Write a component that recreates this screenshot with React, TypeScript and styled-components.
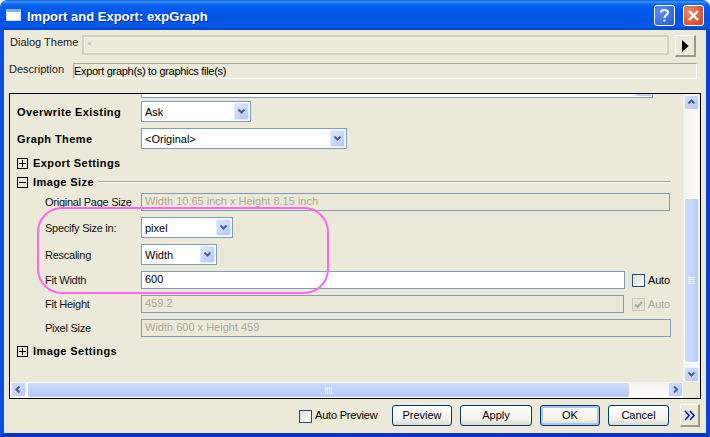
import React from 'react';
import styled, { createGlobalStyle } from 'styled-components';

const Global = createGlobalStyle`
  html, body { margin: 0; padding: 0; background: #fff; }
  * { box-sizing: border-box; }
`;

const uiFont = `"Liberation Sans", Arial, sans-serif`;

const Win = styled.div`
  width: 710px;
  height: 437px;
  display: flex;
  flex-direction: column;
  overflow: hidden;
  border-radius: 7px 7px 0 0;
  font-family: ${uiFont};
  font-size: 11px;
  color: #000;
`;

const TitleBar = styled.div`
  height: 30px;
  flex: none;
  display: flex;
  align-items: center;
  padding: 0 6px 0 6px;
  gap: 6px;
  background: linear-gradient(180deg, #0a5fe0 0, #3f94f5 2px, #0f6cec 4px, #0058ee 9px, #0054e3 20px, #0159ec 26px, #0349cc 29px, #0340b8 30px);
`;

const TitleIcon = styled.div`
  width: 15px;
  height: 12px;
  flex: none;
  margin-top: -1px;
  background: #fff;
  border: 1px solid #cfe0fa;
  border-top: 3px solid #7fb0f0;
`;

const TitleText = styled.div`
  flex: 1;
  padding-top: 2px;
  font-family: "Liberation Sans", sans-serif;
  font-weight: 700;
  font-size: 13px;
  color: #fff;
  text-shadow: 1px 1px 0 #0f2f9c;
`;

const CaptionButton = styled.div<{ $close?: boolean }>`
  width: 21px;
  height: 21px;
  margin-left: 2px;
  flex: none;
  border: 1px solid #fff;
  border-radius: 3px;
  display: flex;
  align-items: center;
  justify-content: center;
  background: ${p => (p.$close
    ? 'radial-gradient(circle at 30% 30%, #ec8d6f, #dc5a34 60%, #c2401c)'
    : 'radial-gradient(circle at 30% 30%, #5f8df0, #3a6ee6 60%, #2a56cf)')};
`;

const Client = styled.div`
  flex: 1;
  display: flex;
  flex-direction: column;
  background: #ece9d8;
  border-left: 4px solid #0a4fe0;
  border-right: 4px solid #0a44d4;
  border-bottom: 4px solid #0a35c4;
  padding: 5px 6px 0 5px;
  position: relative;
`;

const ThemeRow = styled.div`
  height: 22px;
  display: flex;
  align-items: flex-start;
  padding-left: 1px;
`;

const ThemeLabel = styled.div`
  width: 72px;
  line-height: 14px;
  color: #222;
`;

const ThemeBox = styled.div`
  width: 587px;
  height: 20px;
  border: 2px solid #d2cfbd;
  background: #ece9d8;
  box-shadow: inset 0 0 0 1px #f3f1e6;
  font-size: 8px;
  color: #aaa;
  padding: 1px 0 0 3px;
  line-height: 12px;
`;

const RaisedButton = styled.div`
  width: 21px;
  height: 22px;
  margin-left: 6px;
  background: #ece9d8;
  border-top: 1px solid #fff;
  border-left: 1px solid #fff;
  border-right: 2px solid #9d9a88;
  border-bottom: 2px solid #9d9a88;
  display: flex;
  align-items: center;
  justify-content: center;
`;

const DescRow = styled.div`
  height: 16px;
  margin-top: 6px;
  display: flex;
`;

const DescLabel = styled.div`
  width: 64px;
  line-height: 13px;
  color: #222;
`;

const DescField = styled.div`
  width: 624px;
  height: 16px;
  line-height: 14px;
  padding-left: 0;
  letter-spacing: -0.3px;
  border-top: 1px solid #aca899;
  border-left: 1px solid #aca899;
  border-right: 1px solid #fff;
  border-bottom: 1px solid #fff;
`;

const Panel = styled.div`
  margin-top: 14px;
  width: 692px;
  height: 306px;
  border: 1px solid #000;
  display: grid;
  grid-template-columns: 673px 16px;
  grid-template-rows: 288px 16px;
  position: relative;
`;

const Content = styled.div`
  overflow: hidden;
  display: flex;
  flex-direction: column;
`;

const ClippedField = styled.div`
  height: 4px;
  width: 512px;
  margin-left: 131px;
  background: #fff;
  border: 1px solid #7f9db9;
  border-top: 0;
  flex: none;
  display: flex;
  justify-content: flex-end;
  padding-right: 1px;
`;

const ClippedStub = styled.div`
  width: 15px;
  height: 2px;
  background: #bfcff5;
`;

const Row = styled.div<{ $h?: number; $mt?: number; $nested?: boolean }>`
  height: ${p => p.$h ?? 18}px;
  margin-top: ${p => p.$mt ?? 6}px;
  flex: none;
  display: flex;
  align-items: center;
  padding-left: ${p => (p.$nested ? 35 : 7)}px;
`;

const BoldLabel = styled.div`
  width: 124px;
  font-weight: 700;
  font-size: 11px;
  letter-spacing: 0.42px;
`;

const FieldLabel = styled.div`
  width: 96px;
  color: #111;
  letter-spacing: -0.25px;
`;

const Select = styled.div<{ $w: number }>`
  width: ${p => p.$w}px;
  height: 21px;
  border: 1px solid #7f9db9;
  background: #fff;
  display: flex;
  align-items: center;
  justify-content: space-between;
  padding: 1px 1px 1px 3px;
`;

const SelectArrow = styled.div`
  width: 15px;
  height: 17px;
  border: 1px solid #dfe9fd;
  border-radius: 2px;
  background: linear-gradient(135deg, #dce6fd, #b4c8f6);
  display: flex;
  align-items: center;
  justify-content: center;
`;

const Input = styled.div<{ $w: number; $on?: boolean }>`
  width: ${p => p.$w}px;
  height: 18px;
  border: 1px solid #7f9db9;
  background: ${p => (p.$on ? '#fff' : 'transparent')};
  color: ${p => (p.$on ? '#000' : '#aca899')};
  line-height: 15px;
  padding-left: 3px;
  flex: none;
`;

const Check = styled.div<{ $off?: boolean }>`
  width: 13px;
  height: 13px;
  margin-left: ${p => (p.$off ? 8 : 7)}px;
  flex: none;
  border: 1px solid ${p => (p.$off ? '#c9c6b6' : '#1c5180')};
  background: ${p => (p.$off ? '#e6e3d2' : 'linear-gradient(135deg, #dcdcd7, #fff)')};
  display: flex;
  align-items: center;
  justify-content: center;
`;

const CheckText = styled.span<{ $off?: boolean }>`
  margin-left: 3px;
  letter-spacing: -0.2px;
  color: ${p => (p.$off ? '#aca899' : '#000')};
`;

const SectionHead = styled.div`
  display: flex;
  align-items: center;
  width: 100%;
  padding-right: 12px;
`;

const Toggle = styled.div`
  width: 11px;
  height: 11px;
  flex: none;
  border: 1px solid #000;
  margin-right: 5px;
  position: relative;
  &::before {
    content: '';
    position: absolute;
    left: 1px;
    right: 1px;
    top: 4px;
    height: 1px;
    background: #000;
  }
`;

const TogglePlus = styled(Toggle)`
  &::after {
    content: '';
    position: absolute;
    top: 1px;
    bottom: 1px;
    left: 4px;
    width: 1px;
    background: #000;
  }
`;

const SectionText = styled.div`
  font-weight: 700;
  font-size: 11px;
  letter-spacing: 0.42px;
  white-space: nowrap;
`;

const Etched = styled.div`
  flex: 1;
  margin-left: 4px;
  height: 2px;
  border-top: 1px solid #aca899;
  border-bottom: 1px solid #fff;
`;

const VBar = styled.div`
  grid-row: 1 / 3;
  grid-column: 2;
  display: flex;
  flex-direction: column;
  height: 288px;
  background: linear-gradient(90deg, #f3f1ec, #fefefd);
  padding: 1px 0 0 1px;
`;

const ScrollBtn = styled.div`
  width: 15px;
  height: 15px;
  flex: none;
  border: 1px solid #eef3fe;
  border-radius: 2px;
  background: linear-gradient(135deg, #d3def9, #b8cbf6);
  display: flex;
  align-items: center;
  justify-content: center;
`;

const VTrack = styled.div`
  flex: 1;
  display: flex;
  flex-direction: column;
  padding-top: 88px;
`;

const VThumb = styled.div`
  width: 15px;
  height: 165px;
  border: 1px solid #fff;
  border-radius: 2px;
  background: linear-gradient(90deg, #cfdcfb, #c6d6fb 50%, #b6caf6);
  display: flex;
  align-items: center;
  justify-content: center;
`;

const HBar = styled.div`
  display: flex;
  height: 16px;
  grid-row: 2;
  grid-column: 1;
  padding-left: 1px;
  background: linear-gradient(180deg, #f3f1ec, #fefefd);
`;

const HThumb = styled.div`
  width: 603px;
  height: 16px;
  margin-left: 1px;
  border: 1px solid #fff;
  border-radius: 2px;
  background: linear-gradient(180deg, #cfdcfb, #c0d2fa 50%, #b6caf6);
  display: flex;
  align-items: center;
  justify-content: center;
  flex: none;
`;

const HSpacer = styled.div`
  flex: 1;
`;

const Footer = styled.div`
  flex: 1;
  display: flex;
  align-items: flex-start;
  padding: 6px 0 0 290px;
`;

const FootCheck = styled.div`
  width: 13px;
  height: 13px;
  margin-top: 5px;
  border: 1px solid #1c5180;
  background: linear-gradient(135deg, #dcdcd7, #fff);
  flex: none;
`;

const FootText = styled.div`
  margin: 4px 0 0 3px;
  width: 77px;
  flex: none;
  letter-spacing: -0.2px;
`;

const PushButton = styled.div<{ $w: number; $def?: boolean }>`
  width: ${p => p.$w}px;
  height: 21px;
  margin-right: 8px;
  flex: none;
  border: 1px solid #003c74;
  border-radius: 3px;
  background: linear-gradient(180deg, #fff, #f3f2ec 70%, #dcd8ca);
  box-shadow: ${p => (p.$def ? 'inset 0 0 0 2px #a9c4ee' : 'none')};
  text-align: center;
  line-height: 19px;
`;

const MoreButton = styled(RaisedButton)`
  margin: -1px 0 0 3px;
  width: 21px;
  height: 23px;
`;

const Highlight = styled.div`
  position: absolute;
  left: 27px;
  top: 113px;
  width: 292px;
  height: 87px;
  border: 2px solid #ff66f0;
  border-radius: 25px;
  pointer-events: none;
`;

const Chevron = ({ dir, color = '#4d6185' }: { dir: 'up' | 'down' | 'left' | 'right'; color?: string }) => {
  const d = {
    down: 'M1.5 2.5 L4.5 5.5 L7.5 2.5',
    up: 'M1.5 5.5 L4.5 2.5 L7.5 5.5',
    left: 'M5.5 1.5 L2.5 4.5 L5.5 7.5',
    right: 'M3 1.5 L6 4.5 L3 7.5',
  }[dir];
  return (
    <svg width="9" height="9" viewBox="0 0 9 9">
      <path d={d} fill="none" stroke={color} strokeWidth="2" />
    </svg>
  );
};

const Grip = ({ vertical }: { vertical?: boolean }) => (
  <svg width={vertical ? 7 : 8} height={vertical ? 8 : 7} viewBox={vertical ? '0 0 7 8' : '0 0 8 7'}>
    {[0, 1, 2, 3].map(i =>
      vertical ? (
        <rect key={i} x="0" y={i * 2} width="7" height="1" fill="#eef3fe" />
      ) : (
        <rect key={i} x={i * 2} y="0" width="1" height="7" fill="#eef3fe" />
      ),
    )}
  </svg>
);

const DropSelect = ({ w, value }: { w: number; value: string }) => (
  <Select $w={w}>
    <span>{value}</span>
    <SelectArrow>
      <Chevron dir="down" />
    </SelectArrow>
  </Select>
);

export default function App() {
  return (
    <Win>
      <Global />
      <TitleBar>
        <TitleIcon />
        <TitleText>Import and Export: expGraph</TitleText>
        <CaptionButton>
          <svg width="13" height="15" viewBox="0 0 13 15">
            <path d="M3 4.5 C3 1 10 1 10 4.5 C10 7 6.5 7 6.5 10" fill="none" stroke="#fff" strokeWidth="2" />
            <rect x="5.5" y="11.5" width="2" height="2" fill="#fff" />
          </svg>
        </CaptionButton>
        <CaptionButton $close>
          <svg width="13" height="13" viewBox="0 0 13 13">
            <path d="M2 2 L11 11 M11 2 L2 11" stroke="#fff" strokeWidth="2.4" />
          </svg>
        </CaptionButton>
      </TitleBar>
      <Client>
        <ThemeRow>
          <ThemeLabel>Dialog Theme</ThemeLabel>
          <ThemeBox>×</ThemeBox>
          <RaisedButton>
            <svg width="7" height="12" viewBox="0 0 7 12">
              <path d="M0 0 L6.5 6 L0 12 Z" fill="#000" />
            </svg>
          </RaisedButton>
        </ThemeRow>
        <DescRow>
          <DescLabel>Description</DescLabel>
          <DescField>Export graph(s) to graphics file(s)</DescField>
        </DescRow>
        <Panel>
          <Content>
            <ClippedField>
              <ClippedStub />
            </ClippedField>
            <Row $h={21} $mt={3}>
              <BoldLabel>Overwrite Existing</BoldLabel>
              <DropSelect w={110} value="Ask" />
            </Row>
            <Row $h={21}>
              <BoldLabel>Graph Theme</BoldLabel>
              <DropSelect w={206} value="<Original>" />
            </Row>
            <Row $h={16}>
              <SectionHead>
                <TogglePlus />
                <SectionText>Export Settings</SectionText>
              </SectionHead>
            </Row>
            <Row $h={16} $mt={3}>
              <SectionHead>
                <Toggle />
                <SectionText>Image Size</SectionText>
                <Etched />
              </SectionHead>
            </Row>
            <Row $mt={3} $nested>
              <FieldLabel>Original Page Size</FieldLabel>
              <Input $w={529}>Width 10.65 inch x Height 8.15 inch</Input>
            </Row>
            <Row $h={21} $nested>
              <FieldLabel>Specify Size in:</FieldLabel>
              <DropSelect w={92} value="pixel" />
            </Row>
            <Row $h={21} $nested>
              <FieldLabel>Rescaling</FieldLabel>
              <DropSelect w={76} value="Width" />
            </Row>
            <Row $nested>
              <FieldLabel>Fit Width</FieldLabel>
              <Input $w={484} $on>600</Input>
              <Check />
              <CheckText>Auto</CheckText>
            </Row>
            <Row $nested>
              <FieldLabel>Fit Height</FieldLabel>
              <Input $w={483}>459.2</Input>
              <Check $off>
                <svg width="9" height="9" viewBox="0 0 9 9">
                  <path d="M1 4.5 L3.5 7 L8 2" fill="none" stroke="#aca899" strokeWidth="2" />
                </svg>
              </Check>
              <CheckText $off>Auto</CheckText>
            </Row>
            <Row $nested>
              <FieldLabel>Pixel Size</FieldLabel>
              <Input $w={530}>Width 600 x Height 459</Input>
            </Row>
            <Row $h={16}>
              <SectionHead>
                <TogglePlus />
                <SectionText>Image Settings</SectionText>
              </SectionHead>
            </Row>
          </Content>
          <VBar>
            <ScrollBtn><Chevron dir="up" /></ScrollBtn>
            <VTrack>
              <VThumb><Grip vertical /></VThumb>
            </VTrack>
            <ScrollBtn><Chevron dir="down" /></ScrollBtn>
          </VBar>
          <HBar>
            <ScrollBtn><Chevron dir="left" /></ScrollBtn>
            <HThumb><Grip /></HThumb>
            <HSpacer />
            <ScrollBtn><Chevron dir="right" /></ScrollBtn>
          </HBar>
          <Highlight />
        </Panel>
        <Footer>
          <FootCheck />
          <FootText>Auto Preview</FootText>
          <PushButton $w={60}>Preview</PushButton>
          <PushButton $w={72}>Apply</PushButton>
          <PushButton $w={60} $def>OK</PushButton>
          <PushButton $w={61}>Cancel</PushButton>
          <MoreButton>
            <svg width="12" height="11" viewBox="0 0 12 11">
              <path d="M1 1 L5 5.5 L1 10 M6 1 L10 5.5 L6 10" fill="none" stroke="#0018e0" strokeWidth="1.6" />
            </svg>
          </MoreButton>
        </Footer>
      </Client>
    </Win>
  );
}
